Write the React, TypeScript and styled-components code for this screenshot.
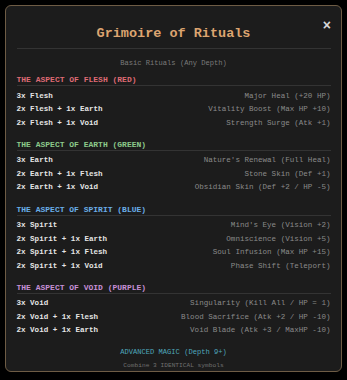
import styled, { createGlobalStyle } from "styled-components";

const GlobalStyle = createGlobalStyle`
  html, body {
    margin: 0;
    padding: 0;
    background: #000;
  }
  body {
    font-family: "Liberation Mono", "Courier New", monospace;
  }
`;

type Recipe = { combo: string; effect: string };
type Aspect = { title: string; color: string; recipes: Recipe[] };

const aspects: Aspect[] = [
  {
    title: "THE ASPECT OF FLESH (RED)",
    color: "#df6a74",
    recipes: [
      { combo: "3x Flesh", effect: "Major Heal (+20 HP)" },
      { combo: "2x Flesh + 1x Earth", effect: "Vitality Boost (Max HP +10)" },
      { combo: "2x Flesh + 1x Void", effect: "Strength Surge (Atk +1)" },
    ],
  },
  {
    title: "THE ASPECT OF EARTH (GREEN)",
    color: "#8cc98a",
    recipes: [
      { combo: "3x Earth", effect: "Nature's Renewal (Full Heal)" },
      { combo: "2x Earth + 1x Flesh", effect: "Stone Skin (Def +1)" },
      { combo: "2x Earth + 1x Void", effect: "Obsidian Skin (Def +2 / HP -5)" },
    ],
  },
  {
    title: "THE ASPECT OF SPIRIT (BLUE)",
    color: "#6aaee8",
    recipes: [
      { combo: "3x Spirit", effect: "Mind's Eye (Vision +2)" },
      { combo: "2x Spirit + 1x Earth", effect: "Omniscience (Vision +5)" },
      { combo: "2x Spirit + 1x Flesh", effect: "Soul Infusion (Max HP +15)" },
      { combo: "2x Spirit + 1x Void", effect: "Phase Shift (Teleport)" },
    ],
  },
  {
    title: "THE ASPECT OF VOID (PURPLE)",
    color: "#c68fd6",
    recipes: [
      { combo: "3x Void", effect: "Singularity (Kill All / HP = 1)" },
      { combo: "2x Void + 1x Flesh", effect: "Blood Sacrifice (Atk +2 / HP -10)" },
      { combo: "2x Void + 1x Earth", effect: "Void Blade (Atk +3 / MaxHP -10)" },
    ],
  },
];

const Panel = styled.div`
  position: relative;
  margin: 5px;
  border: 1px solid #6e5c45;
  border-radius: 6px;
  background: #1c1c1c;
  padding: 20px 10.5px 0;
`;

const Close = styled.button`
  position: absolute;
  top: 12px;
  right: 10px;
  border: none;
  background: none;
  padding: 0;
  color: #d8d8d8;
  font-family: "Liberation Sans", Arial, sans-serif;
  font-weight: bold;
  font-size: 14px;
  line-height: 14px;
  cursor: pointer;
`;

const Title = styled.h1`
  margin: 0;
  text-align: center;
  font-size: 13.5px;
  line-height: 16px;
  font-weight: bold;
  color: #dca470;
  padding-bottom: 6px;
  border-bottom: 1px solid #333;
`;

const Subtitle = styled.div`
  text-align: center;
  font-size: 7.1px;
  line-height: 10px;
  color: #7a7a7a;
  margin: 9px 0 7.4px;
`;

const Section = styled.section`
  margin-bottom: 10.5px;
`;

const SectionHeader = styled.div<{ $color: string }>`
  font-size: 8px;
  line-height: 10px;
  font-weight: bold;
  color: ${(p) => p.$color};
  border-bottom: 1px solid #333;
  margin-bottom: 2.4px;
`;

const Row = styled.div`
  display: flex;
  justify-content: space-between;
  align-items: center;
  height: 13.6px;
  font-size: 7.55px;
`;

const Combo = styled.span`
  font-weight: bold;
  color: #e6e6e6;
`;

const Effect = styled.span`
  color: #8a8a8a;
`;

const Advanced = styled.div`
  text-align: center;
  font-size: 7.1px;
  line-height: 10px;
  color: #4fa8bd;
  margin-top: -1px;
`;

const Footnote = styled.div`
  text-align: center;
  font-size: 6.2px;
  line-height: 8px;
  color: #707070;
  margin-top: 5px;
  padding-bottom: 1px;
`;

export default function App() {
  return (
    <>
      <GlobalStyle />
      <Panel>
        <Close aria-label="Close">×</Close>
        <Title>Grimoire of Rituals</Title>
        <Subtitle>Basic Rituals (Any Depth)</Subtitle>
        {aspects.map((a) => (
          <Section key={a.title}>
            <SectionHeader $color={a.color}>{a.title}</SectionHeader>
            {a.recipes.map((r) => (
              <Row key={r.combo}>
                <Combo>{r.combo}</Combo>
                <Effect>{r.effect}</Effect>
              </Row>
            ))}
          </Section>
        ))}
        <Advanced>ADVANCED MAGIC (Depth 9+)</Advanced>
        <Footnote>Combine 3 IDENTICAL symbols</Footnote>
      </Panel>
    </>
  );
}
